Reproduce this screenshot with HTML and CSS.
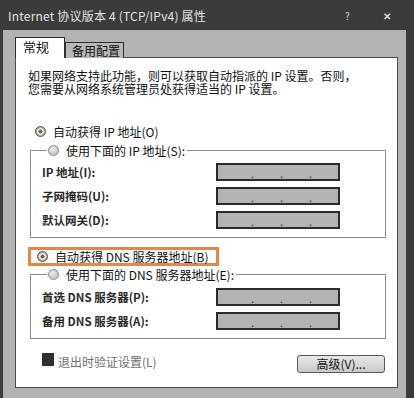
FILE: index.html
```html
<!DOCTYPE html>
<html lang="zh-CN">
<head>
<meta charset="utf-8">
<title>Internet 协议版本 4 (TCP/IPv4) 属性</title>
<link rel="stylesheet" href="styles.css">
</head>
<body>
<div class="window">
  <div class="titlebar">
    <span class="title">Internet 协议版本 4 (TCP/IPv4) 属性</span>
    <span class="help">?</span>
    <span class="close">✕</span>
  </div>
  <div class="frame">
    <div class="tabs">
      <div class="tab active">常规</div>
      <div class="tab">备用配置</div>
    </div>
    <div class="pane">
      <p class="intro">如果网络支持此功能，则可以获取自动指派的 IP 设置。否则，<br>您需要从网络系统管理员处获得适当的 IP 设置。</p>
      <div class="opt opt-first"><span class="radio on"></span>自动获得 IP 地址(O)</div>
      <fieldset class="group">
        <legend class="opt"><span class="radio off"></span>使用下面的 IP 地址(S):</legend>
        <div class="row"><span class="lbl">IP 地址(I):</span><span class="ip"><i>.</i><i>.</i><i>.</i></span></div>
        <div class="row"><span class="lbl">子网掩码(U):</span><span class="ip"><i>.</i><i>.</i><i>.</i></span></div>
        <div class="row"><span class="lbl">默认网关(D):</span><span class="ip"><i>.</i><i>.</i><i>.</i></span></div>
      </fieldset>
      <div class="opt hl"><span class="radio on"></span>自动获得 DNS 服务器地址(B)</div>
      <fieldset class="group group-dns">
        <legend class="opt"><span class="radio off"></span>使用下面的 DNS 服务器地址(E):</legend>
        <div class="row"><span class="lbl">首选 DNS 服务器(P):</span><span class="ip"><i>.</i><i>.</i><i>.</i></span></div>
        <div class="row"><span class="lbl">备用 DNS 服务器(A):</span><span class="ip"><i>.</i><i>.</i><i>.</i></span></div>
      </fieldset>
      <div class="footer">
        <span class="chk"></span>
        <span class="chk-lbl">退出时验证设置(L)</span>
        <span class="btn">高级(V)...</span>
      </div>
    </div>
  </div>
</div>
</body>
</html>
```
FILE: styles.css
```css
* { box-sizing: border-box; }
html, body { margin: 0; padding: 0; }
body {
  background: #3b3b3b;
  font-family: "Noto Sans CJK SC", "Noto Sans", sans-serif;
  font-size: 12px;
  color: #111;
}
.window {
  width: 414px;
  height: 398px;
  display: flex;
  flex-direction: column;
  background: #3b3b3b;
}
.titlebar {
  height: 30px;
  display: flex;
  align-items: center;
  padding-left: 8px;
  color: #e2e2e2;
  font-size: 12px;
}
.title { flex: 1; letter-spacing: 0.2px; }
.help { width: 10px; margin-right: 28px; font-size: 10px; color: #d8d8d8; }
.close { width: 10px; margin-right: 21px; font-size: 10px; font-weight: bold; color: #d8d8d8; }
.frame {
  flex: 1;
  margin: 0 8px 0 3px;
  background: #b3b3b3;
  padding: 7px 8px 10px 12px;
  display: flex;
  flex-direction: column;
}
.tabs {
  display: flex;
  align-items: flex-end;
  height: 21px;
  margin-bottom: -1px;
  position: relative;
  z-index: 1;
}
.tab {
  border: 1px solid #2e2e2e;
  border-bottom: none;
  padding: 0 3px 0 6px;
  line-height: 15px;
  height: 16px;
  background: #b8b8b8;
  font-size: 12px;
}
.tab.active {
  background: #fff;
  height: 21px;
  width: 50px;
  line-height: 18px;
  padding-left: 7px;
  font-size: 13px;
}
.pane {
  flex: 1;
  background: #fff;
  border: 1px solid #4a4a4a;
  padding: 0;
}
.intro {
  margin: 11px 0 0 12px;
  line-height: 13px;
  color: #111;
}
.opt {
  display: flex;
  align-items: center;
  line-height: 13px;
  height: 14px;
  gap: 7px;
  white-space: nowrap;
}
.opt-first { margin: 29px 0 0 19px; }
.radio {
  width: 11px;
  height: 11px;
  border-radius: 50%;
  flex: none;
}
.radio.on {
  border: 1px solid #55504a;
  background: radial-gradient(circle, #6e6656 0 1.8px, #f4f2ee 2.3px 3px, #bdb3a0 3.5px);
}
.radio.off {
  border: 1px solid #8a8a8a;
  background: radial-gradient(circle at 40% 35%, #ececec, #b6b6b6);
}
.group {
  margin: 5px 11px 0 14px;
  padding: 6px 0 8px 11px;
  border: 1px solid #8c8c8c;
}
.group legend {
  margin-left: 5px;
  padding: 0 2px 0 1px;
}
.group-dns { margin-top: 1px; padding-top: 7px; }
.row {
  display: flex;
  align-items: center;
  height: 18px;
}
.row + .row { margin-top: 6px; }
.lbl {
  width: 174px;
  font-weight: bold;
  color: #2a2a2a;
  font-size: 11.5px;
}
.ip {
  width: 124px;
  height: 18px;
  border: 2px solid #2b2b2b;
  background: #b3b3b3;
  display: flex;
  align-items: flex-end;
  padding: 0 0 0 33px;
}
.ip i {
  font-style: normal;
  width: 30px;
  line-height: 11px;
  color: #333;
  font-size: 11px;
}
.hl {
  margin: 9px 0 0 12px;
  width: 191px;
  height: 19px;
  border: 3px solid #e0894b;
  padding-left: 6px;
}
.footer {
  display: flex;
  align-items: flex-start;
  margin-top: 16px;
  padding-left: 26px;
  padding-right: 12px;
}
.chk {
  width: 12px;
  height: 13px;
  margin-top: -2px;
  background: #2f2f2f;
  flex: none;
}
.chk-lbl {
  flex: 1;
  margin-left: 4px;
  line-height: 13px;
  color: #707070;
}
.btn {
  width: 88px;
  height: 18px;
  border: 1px solid #5a5a5a;
  border-radius: 3px;
  background: linear-gradient(#e8e8e8, #c9c9c9);
  text-align: center;
  line-height: 15px;
  color: #111;
}
```
